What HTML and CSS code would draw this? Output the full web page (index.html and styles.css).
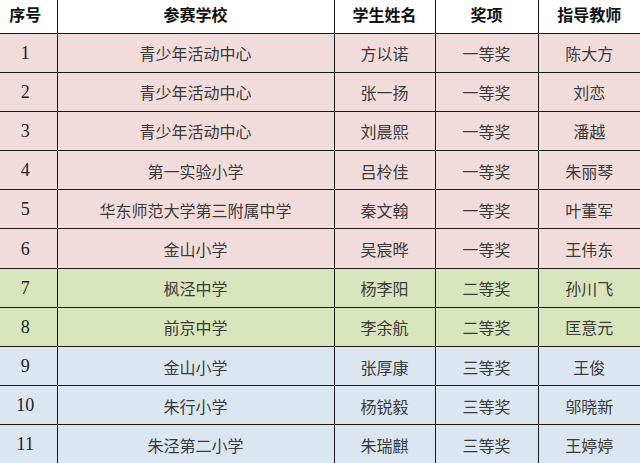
FILE: index.html
```html
<!DOCTYPE html>
<html lang="zh-CN">
<head>
<meta charset="utf-8">
<title>获奖名单</title>
<link rel="stylesheet" href="styles.css">
</head>
<body>
<table class="awards">
  <colgroup>
    <col class="c-no"><col class="c-school"><col class="c-name"><col class="c-prize"><col class="c-teacher">
  </colgroup>
  <thead>
    <tr class="head"><th class="no">序号</th><th>参赛学校</th><th>学生姓名</th><th>奖项</th><th>指导教师</th></tr>
  </thead>
  <tbody>
    <tr class="pink"><td class="no num">1</td><td>青少年活动中心</td><td>方以诺</td><td>一等奖</td><td>陈大方</td></tr>
    <tr class="pink"><td class="no num">2</td><td>青少年活动中心</td><td>张一扬</td><td>一等奖</td><td>刘恋</td></tr>
    <tr class="pink"><td class="no num">3</td><td>青少年活动中心</td><td>刘晨熙</td><td>一等奖</td><td>潘越</td></tr>
    <tr class="pink"><td class="no num">4</td><td>第一实验小学</td><td>吕柃佳</td><td>一等奖</td><td>朱丽琴</td></tr>
    <tr class="pink"><td class="no num">5</td><td>华东师范大学第三附属中学</td><td>秦文翰</td><td>一等奖</td><td>叶董军</td></tr>
    <tr class="pink"><td class="no num">6</td><td>金山小学</td><td>吴宸晔</td><td>一等奖</td><td>王伟东</td></tr>
    <tr class="green"><td class="no num">7</td><td>枫泾中学</td><td>杨李阳</td><td>二等奖</td><td>孙川飞</td></tr>
    <tr class="green"><td class="no num">8</td><td>前京中学</td><td>李余航</td><td>二等奖</td><td>匡意元</td></tr>
    <tr class="blue"><td class="no num">9</td><td>金山小学</td><td>张厚康</td><td>三等奖</td><td>王俊</td></tr>
    <tr class="blue"><td class="no num">10</td><td>朱行小学</td><td>杨锐毅</td><td>三等奖</td><td>邬晓新</td></tr>
    <tr class="blue"><td class="no num">11</td><td>朱泾第二小学</td><td>朱瑞麒</td><td>三等奖</td><td>王婷婷</td></tr>
  </tbody>
</table>
</body>
</html>
```
FILE: styles.css
```css
html, body {
  margin: 0;
  padding: 0;
  background: #ffffff;
  overflow: hidden;
}
.awards {
  border-collapse: collapse;
  table-layout: fixed;
  width: 640px;
  font-family: "Liberation Serif", "Noto Sans CJK SC", serif;
  font-size: 16px;
  color: #3a3a3a;
}
.c-no { width: 57px; }
.c-school { width: 277px; }
.c-name { width: 101px; }
.c-prize { width: 103px; }
.c-teacher { width: 102px; }
.awards th,
.awards td {
  border-right: 1px solid #1a1a1a;
  border-bottom: 1px solid #1a1a1a;
  text-align: center;
  vertical-align: middle;
  padding: 0;
  white-space: nowrap;
  overflow: hidden;
}
.awards th:last-child,
.awards td:last-child {
  border-right: none;
}
.awards .no {
  padding-right: 6px;
}
.awards .num {
  font-size: 18px;
  color: #222222;
}
.head th {
  height: 33px;
  padding-bottom: 5px;
  box-sizing: border-box;
  font-weight: bold;
  color: #111111;
  background: #ffffff;
  font-size: 16px;
}
.awards tbody tr {
  height: 39.2px;
}
.awards tbody td {
  padding-top: 1px;
}
.pink td { background: #f2dcdb; }
.green td { background: #d8e4bc; }
.blue td { background: #dce6f1; }
```
